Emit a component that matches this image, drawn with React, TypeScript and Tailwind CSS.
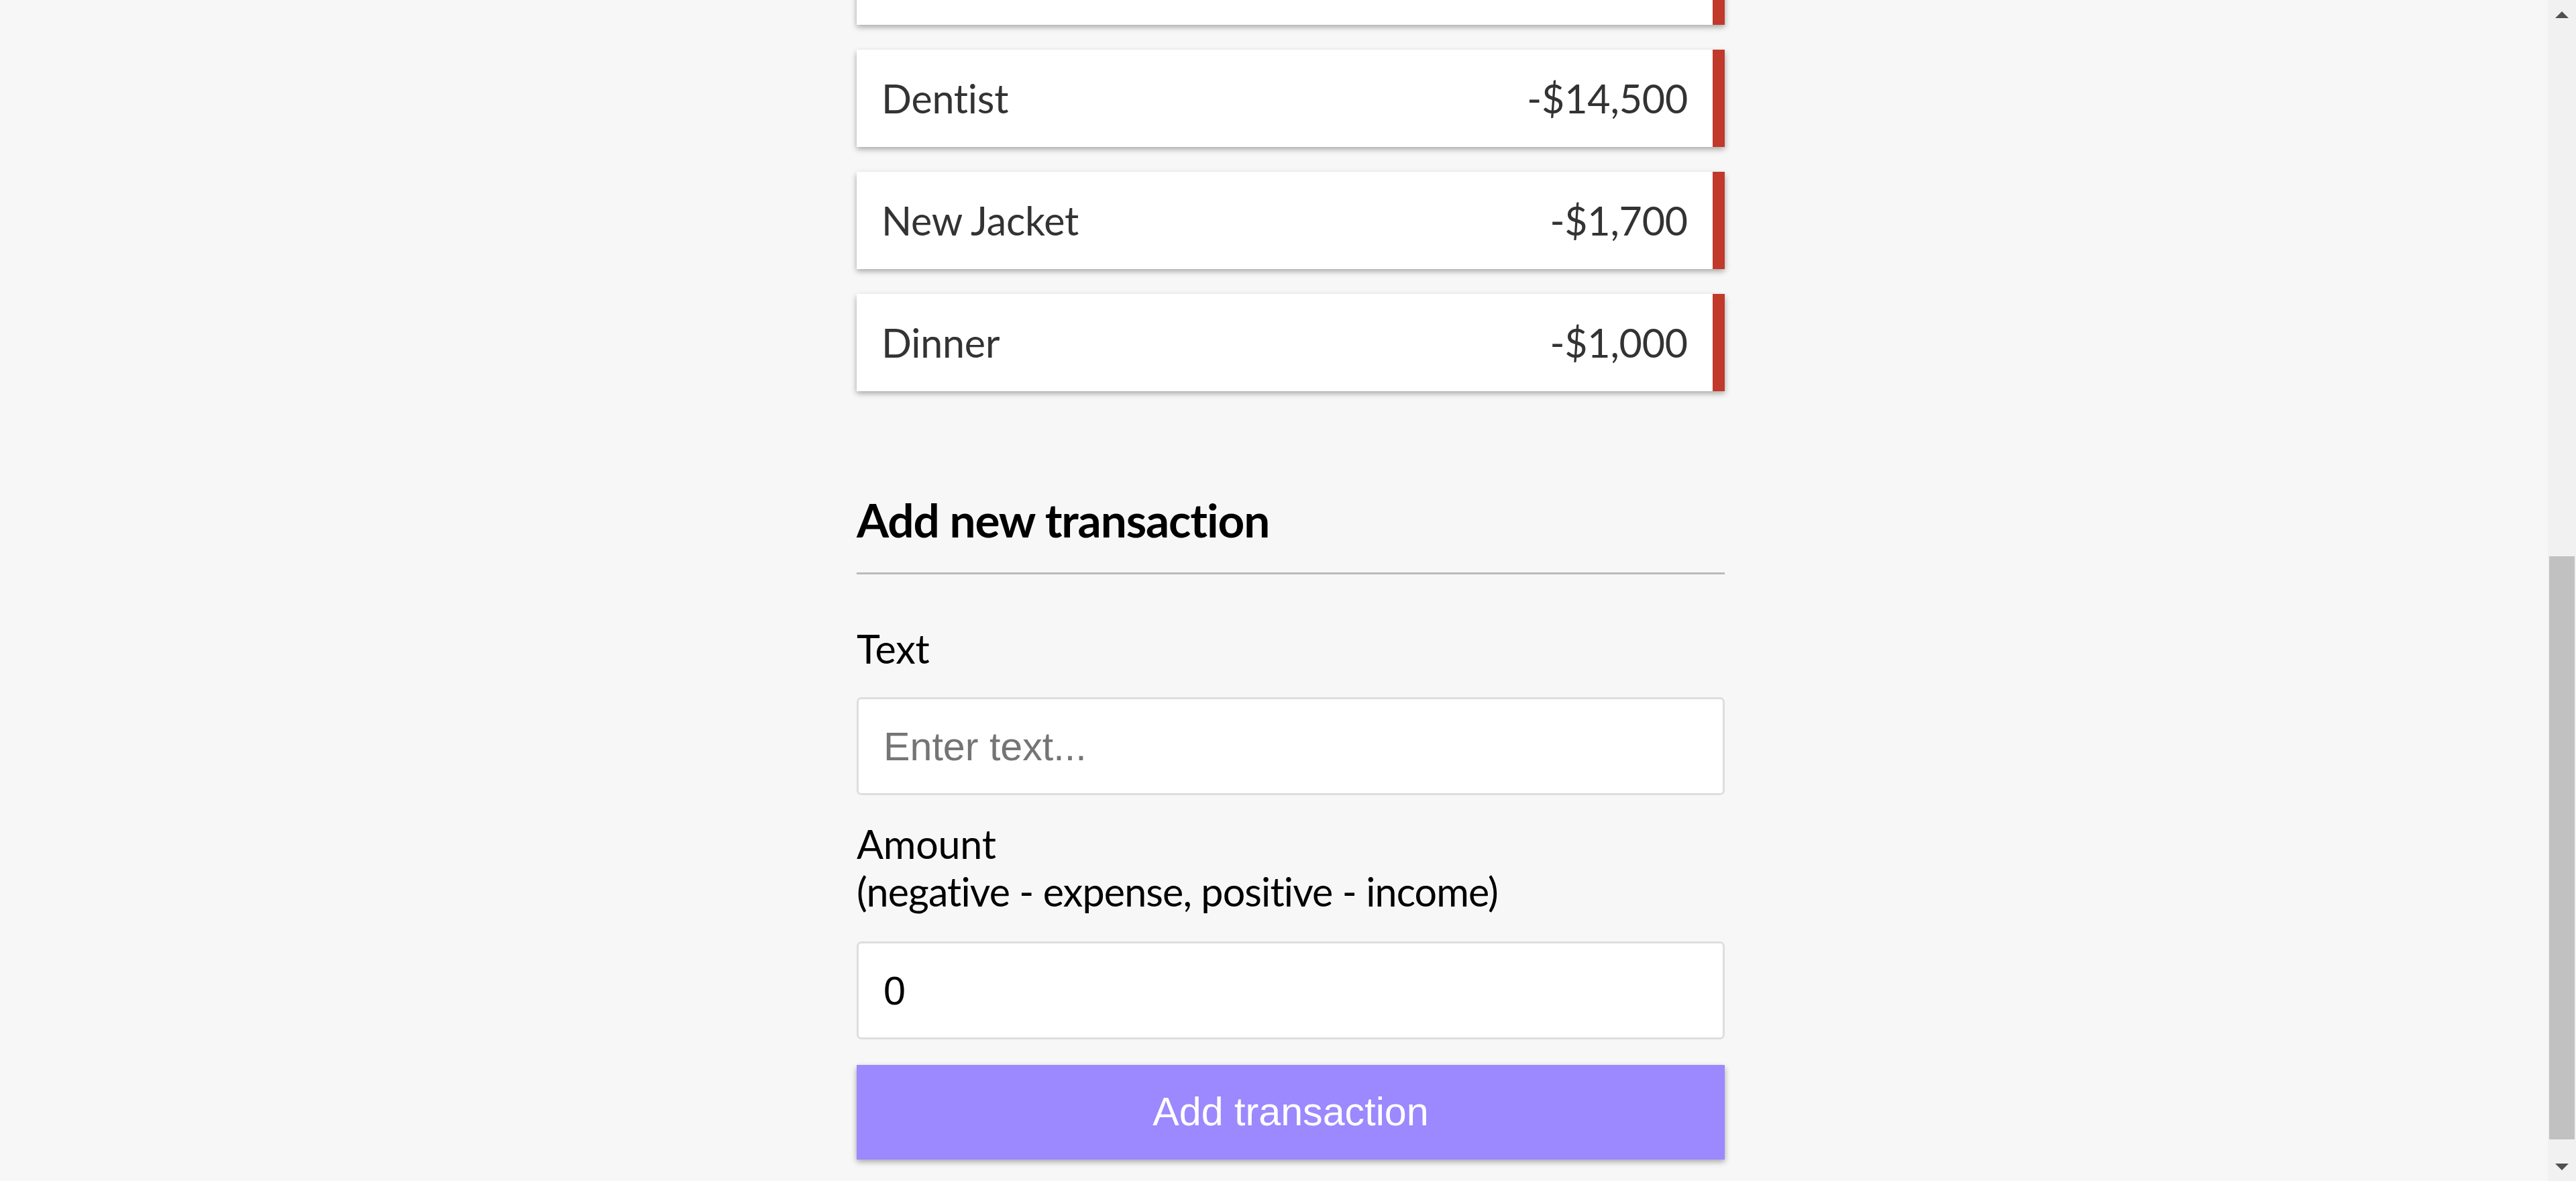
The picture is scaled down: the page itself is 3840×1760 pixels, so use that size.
import React from "react";

const items = [
  { text: "", amount: "" },
  { text: "Dentist", amount: "-$14,500" },
  { text: "New Jacket", amount: "-$1,700" },
  { text: "Dinner", amount: "-$1,000" },
];

function Arrow({ up }: { up?: boolean }) {
  return (
    <svg width="20" height="10" viewBox="0 0 20 10" className="mx-auto block">
      <polygon points={up ? "10,0 20,10 0,10" : "0,0 20,0 10,10"} fill="#505050" />
    </svg>
  );
}

function Scrollbar() {
  return (
    <div className="flex flex-col w-[42px] h-full bg-[#f1f1f1]">
      <div className="h-[829px] pt-[17px]">
        <Arrow up />
      </div>
      <div className="h-[869px] mx-[2px] bg-[#c1c1c1]" />
      <div className="flex-1 pt-[36px]">
        <Arrow />
      </div>
    </div>
  );
}

export default function App() {
  return (
    <div className="flex h-[1760px] overflow-hidden bg-[#f7f7f7] font-['Lato',sans-serif] tracking-[-0.013em] [font-variant-ligatures:none]">
      <main className="flex-1 flex justify-center pl-[50px]">
        <div className="w-[1294px] -mt-[108px]">
          <ul className="flex flex-col gap-[37px]">
            {items.map((item, i) => (
              <li
                key={i}
                className="flex items-center justify-between h-[145px] px-[37px] bg-white text-[#333] text-[59.2px] leading-[71px] border-r-[18px] border-[#c0392b] shadow-[0_3.7px_11px_rgba(0,0,0,0.12),0_3.7px_7.4px_rgba(0,0,0,0.24)]"
              >
                <span>{item.text}</span>
                <span>{item.amount}</span>
              </li>
            ))}
          </ul>

          <h3 className="mt-[150px] pb-[37px] border-b-[3px] border-[#bbb] text-[69.3px] leading-[83px] font-bold text-black tracking-[-0.016em]">
            Add new transaction
          </h3>

          <form className="mt-[37px] text-black">
            <div>
              <label className="block pt-[38px] pb-[37px] text-[59.2px] leading-[71px]">Text</label>
              <input
                type="text"
                placeholder="Enter text..."
                className="block w-full h-[146px] px-[37px] bg-white border-[3px] border-[#dedede] rounded-[7px] text-[59.2px] tracking-normal font-['Liberation_Sans',Arial,sans-serif] placeholder:text-[#757575] outline-none"
              />
            </div>
            <div>
              <label className="block pt-[37px] pb-[39px] text-[59.2px] leading-[71px]">
                Amount
                <br />
                <span className="tracking-[-0.0145em]">(negative - expense, positive - income)</span>
              </label>
              <input
                type="number"
                defaultValue={0}
                className="block w-full h-[146px] px-[37px] bg-white border-[3px] border-[#dedede] rounded-[7px] text-[59.2px] tracking-normal font-['Liberation_Sans',Arial,sans-serif] outline-none"
              />
            </div>
            <button
              type="button"
              className="block w-full h-[141px] mt-[38px] bg-[#9c88ff] text-white text-[59.2px] tracking-normal font-['Liberation_Sans',Arial,sans-serif] shadow-[0_3.7px_11px_rgba(0,0,0,0.12),0_3.7px_7.4px_rgba(0,0,0,0.24)]"
            >
              Add transaction
            </button>
          </form>
        </div>
      </main>
      <Scrollbar />
    </div>
  );
}
